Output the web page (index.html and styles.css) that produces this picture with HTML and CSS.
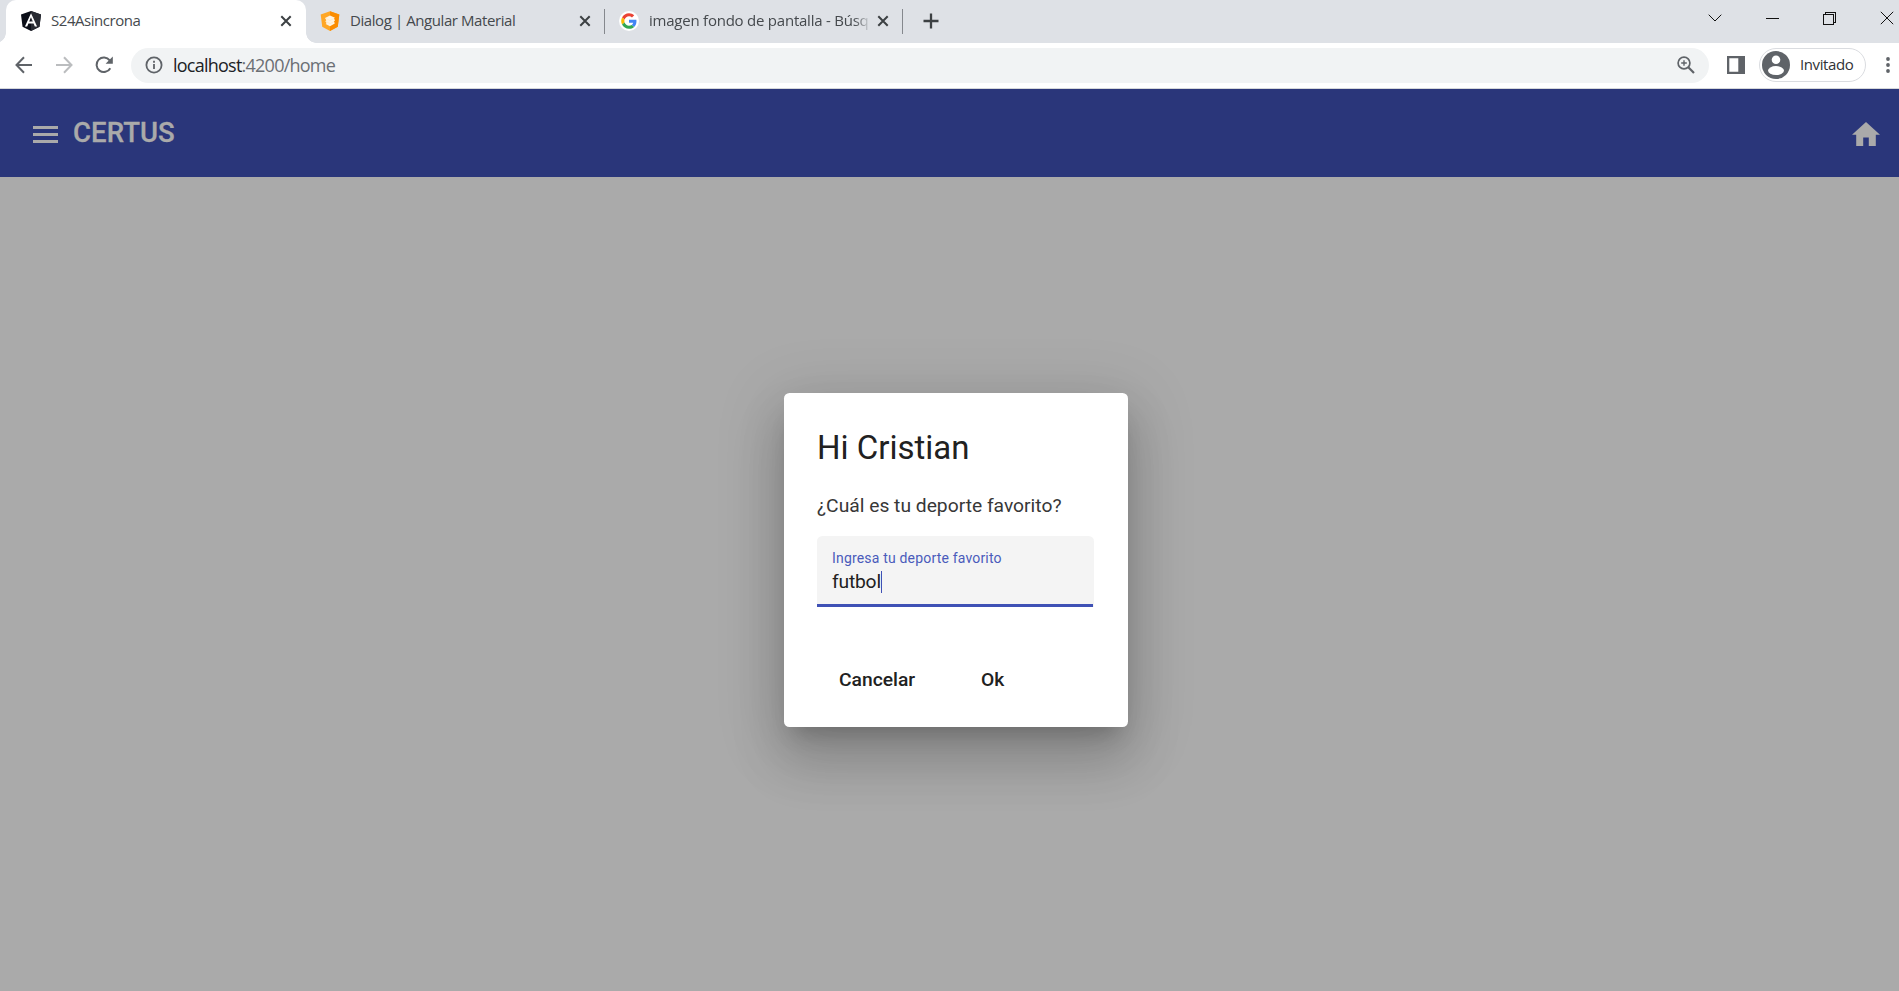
FILE: index.html
```html
<!DOCTYPE html>
<html lang="es">
<head>
<meta charset="utf-8">
<title>S24Asincrona</title>
<link rel="stylesheet" href="styles.css">
</head>
<body>
<header class="tabstrip">
  <div class="tab active">
    <svg class="favicon" viewBox="0 0 20 20"><path fill="#0b0e18" d="M10 0l10 3.4-1.5 12.4L10 20l-8.500-4.200L0 3.400z"/><path fill="#282b33" d="M10 0l10 3.400-1.500 12.400L10 20z"/><path fill="#fff" d="M10 2.200L3.900 15.500h2.300l1.200-3h5.200l1.200 3h2.300zm1.800 8.400H8.200L10 6.300z"/></svg>
    <span class="tab-title t1">S24Asincrona</span>
    <svg class="close" viewBox="0 0 12 12"><path d="M1.300 1.300l9.400 9.400M10.700 1.300l-9.400 9.400"/></svg>
    <span class="foot left"></span><span class="foot right"></span>
  </div>
  <div class="tab second">
    <svg class="favicon" viewBox="0 0 20 20"><path fill="#ffa726" d="M10 0.300l9.300 3.200-1.500 12.300L10 20l-7.800-4.200L.7 3.500z"/><path fill="#fb8c00" d="M10 .3l9.300 3.200-1.500 12.300L10 20z"/><path fill="#fff3e0" d="M10 4.500l5 2.300-1 .7 1 2-1 .8.800 2.200L10 15.200l-4.300-2.100.9-1.200-1.300-1.700 1-.9L5 7z"/><path d="M6 7.500l4 2 4-2M6 10.600l4 2 4-2" fill="none" stroke="#ffe0b2" stroke-width=".5"/></svg>
    <span class="tab-title t2">Dialog | Angular Material</span>
    <svg class="close" viewBox="0 0 12 12"><path d="M1.300 1.300l9.400 9.400M10.700 1.300l-9.400 9.400"/></svg>
  </div>
  <div class="tab divided">
    <svg class="favicon" viewBox="0 0 20 20"><circle cx="10" cy="10" r="10" fill="#fff"/><g transform="translate(2.200 2.200) scale(.325)"><path fill="#EA4335" d="M24 9.500c3.540 0 6.710 1.220 9.210 3.600l6.850-6.850C35.900 2.380 30.470 0 24 0 14.620 0 6.510 5.380 2.560 13.220l7.980 6.190C12.430 13.720 17.740 9.500 24 9.500z"/><path fill="#4285F4" d="M46.980 24.550c0-1.570-.15-3.090-.38-4.550H24v9.020h12.940c-.58 2.960-2.260 5.480-4.780 7.180l7.730 6c4.510-4.180 7.090-10.360 7.090-17.650z"/><path fill="#FBBC05" d="M10.530 28.590c-.48-1.450-.76-2.990-.76-4.590s.27-3.140.76-4.590l-7.980-6.190C.92 16.460 0 20.120 0 24c0 3.880.92 7.540 2.560 10.780l7.970-6.190z"/><path fill="#34A853" d="M24 48c6.480 0 11.930-2.130 15.890-5.810l-7.730-6c-2.150 1.450-4.920 2.300-8.160 2.300-6.260 0-11.570-4.220-13.470-9.910l-7.980 6.190C6.510 42.620 14.620 48 24 48z"/></g></svg>
    <span class="tab-title t3">imagen fondo de pantalla - Búsq</span>
    <svg class="close" viewBox="0 0 12 12"><path d="M1.300 1.300l9.400 9.400M10.700 1.300l-9.400 9.400"/></svg>
  </div>
  <svg class="newtab" viewBox="0 0 16 16"><path d="M8 .5v15M.5 8h15"/></svg>
  <div class="winctl">
    <svg viewBox="0 0 14 14"><path d="M.7 3.700L7 10l6.300-6.300"/></svg>
    <svg viewBox="0 0 14 14" shape-rendering="crispEdges"><path d="M.5 7.500h13"/></svg>
    <svg viewBox="0 0 14 14" shape-rendering="crispEdges"><path d="M.5 3.500h10v10H.5zM2.500 3.500v-2h10v10h-2"/></svg>
    <svg viewBox="0 0 14 14"><path d="M.8.800l12.400 12.400M13.200.8L.8 13.200"/></svg>
  </div>
</header>
<nav class="navbar">
  <svg class="nav back" viewBox="0 0 18 18"><path d="M17 9H2M9 1.300L1.500 9 9 16.700"/></svg>
  <svg class="nav forward" viewBox="0 0 18 18"><path d="M1 9h15M9 1.300L16.500 9 9 16.700"/></svg>
  <svg class="nav reload" viewBox="0 0 18 18"><path d="M15.300 12.200A7.300 7.300 0 1 1 14.700 4.300"/><path class="solid" d="M17.800.6v7.200h-7.200z"/></svg>
  <div class="omnibox">
    <svg class="info" viewBox="0 0 18 18"><circle cx="9" cy="9" r="7.600"/><path d="M9 8v5M9 4.800v2"/></svg>
    <span class="url"><b>localhost</b>:4200/home</span>
    <svg class="mag" viewBox="0 0 18 18"><circle cx="7" cy="7" r="5.900"/><path d="M11.300 11.300l5.700 5.700" stroke-width="2.200"/><path d="M4.200 7h5.600M7 4.200v5.600" stroke-width="1.400"/></svg>
  </div>
  <svg class="panel" viewBox="0 0 18 18"><path d="M0 0h18v18H0zM2.300 2.300v13.400h9V2.300z" fill-rule="evenodd"/></svg>
  <div class="profile">
    <svg viewBox="0 0 28 28"><circle cx="14" cy="14" r="14" fill="#5f6368"/><circle cx="14" cy="8.700" r="4.300" fill="#fff"/><ellipse cx="14" cy="19.600" rx="8" ry="4.500" fill="#fff"/></svg>
    <span>Invitado</span>
  </div>
  <svg class="dots" viewBox="0 0 4 16"><circle cx="2" cy="2" r="1.900"/><circle cx="2" cy="8" r="1.900"/><circle cx="2" cy="14" r="1.900"/></svg>
</nav>
<div class="toolbar">
  <svg class="menu" viewBox="0 0 25 17"><path d="M0 0h25v3H0zM0 7h25v3H0zM0 14h25v3H0z"/></svg>
  <h1>CERTUS</h1>
  <svg class="home" viewBox="2 3 20 17"><path d="M10 20v-6h4v6h5v-8h3L12 3 2 12h3v8z"/></svg>
</div>
<main class="backdrop">
  <section class="dialog">
    <h2>Hi Cristian</h2>
    <p>¿Cuál es tu deporte favorito?</p>
    <div class="field">
      <label>Ingresa tu deporte favorito</label>
      <div class="value"><span>futbol</span><i class="caret"></i></div>
    </div>
    <div class="actions"><button class="cancel">Cancelar</button><button class="ok">Ok</button></div>
  </section>
</main>
</body>
</html>
```
FILE: styles.css
```css
* { box-sizing: border-box; }
body { margin: 0; width: 1899px; height: 991px; overflow: hidden; display: flex; flex-direction: column; background: #aaa; font-family: "Open Sans", "Noto Sans", sans-serif; }
svg { display: block; flex: none; }
h1, h2, p { margin: 0; white-space: nowrap; }

.tabstrip { height: 43px; flex: none; display: flex; background: #dee1e6; padding-left: 6px; }
.tab { position: relative; width: 299px; height: 43px; display: flex; align-items: center; padding: 0 14px 1px 15px; }
.tab.active { width: 300px; background: #fff; border-radius: 10px 10px 0 0; }
.tab.second { width: 298px; padding-left: 14px; padding-right: 13px; }
.foot { position: absolute; bottom: 0; width: 10px; height: 10px; }
.foot.left { left: -10px; background: radial-gradient(circle at 0 0, transparent 9.5px, #fff 10px); }
.foot.right { right: -10px; background: radial-gradient(circle at 100% 0, transparent 9.5px, #fff 10px); }
.divided::before, .divided::after { content: ""; position: absolute; top: 9px; width: 1px; height: 25px; background: #85888d; }
.divided::before { left: 0; }
.divided::after { right: 0; }
.favicon { width: 20px; height: 20px; }
.tab-title { flex: 1; width: 0; margin: 0 12px 2px 10px; font-size: 15px; line-height: 22px; white-space: nowrap; color: #45494d; }
.t1 { letter-spacing: -.45px; }
.t2 { letter-spacing: -.42px; }
.t3 { letter-spacing: -.23px; margin-right: 6px; -webkit-mask-image: linear-gradient(90deg, #000 205px, transparent 222px); mask-image: linear-gradient(90deg, #000 205px, transparent 222px); }
.close { width: 12px; height: 12px; fill: none; stroke: #3c4043; stroke-width: 2; }
.newtab { width: 16px; height: 16px; margin: 13px 0 0 20px; fill: none; stroke: #3c4043; stroke-width: 2.3; }
.winctl { margin-left: auto; padding: 11px 5px 0 0; display: flex; gap: 43.300px; }
.winctl svg { width: 14px; height: 14px; fill: none; stroke: #111; stroke-width: 1; }

.navbar { height: 46px; flex: none; display: flex; align-items: center; padding: 0 9px 1px 15px; background: #fff; border-bottom: 1px solid #d5d7da; }
.nav { width: 18px; height: 18px; fill: none; stroke: #5f6368; stroke-width: 2; }
.forward { margin-left: 21.500px; stroke: #bbbdbf; }
.reload { margin-left: 22px; }
.solid { fill: #5f6368; stroke: none; }
.omnibox { margin-left: 18.500px; width: 1578px; height: 35px; border-radius: 18px; background: #f1f3f4; display: flex; align-items: center; padding: 0 14px; }
.info { width: 18px; height: 18px; fill: none; stroke: #5f6368; stroke-width: 1.800; }
.url { margin-left: 10px; font-size: 18px; line-height: 26px; letter-spacing: -.76px; color: #6b6f74; }
.url b { font-weight: 400; color: #202124; }
.mag { margin-left: auto; width: 18px; height: 18px; fill: none; stroke: #5f6368; stroke-width: 1.700; }
.panel { margin-left: 18px; width: 18px; height: 18px; fill: #5f6368; }
.profile { margin-left: 14px; width: 107px; height: 34px; border: 1px solid #dadce0; border-radius: 17px; display: flex; align-items: center; padding-left: 2px; font-size: 15px; color: #303236; }
.profile svg { width: 28px; height: 28px; }
.profile span { margin: 0 0 2px 10px; letter-spacing: -.4px; }
.dots { margin-left: 20px; width: 4px; height: 16px; fill: #5f6368; }

.toolbar { height: 88px; flex: none; display: flex; align-items: center; padding: 0 19px 0 33px; background: #2a367a; color: #aaa; fill: #aaa; font-family: Roboto, sans-serif; }
.menu { width: 25px; height: 17px; margin-top: 3px; }
.toolbar h1 { margin-left: 15px; font-size: 27.500px; font-weight: 500; line-height: 44px; letter-spacing: .1px; -webkit-text-stroke: .3px #aaa; }
.home { margin: 2px 0 0 auto; width: 28px; height: 24px; }

.backdrop { flex: 1; display: flex; align-items: flex-start; padding: 216px 0 0 784px; font-family: Roboto, sans-serif; color: #212121; }
.dialog { width: 344px; height: 334px; padding: 33px; border-radius: 5.500px; background: #fff; box-shadow: 0 15px 21px -10px rgba(0,0,0,.2), 0 33px 52px 4px rgba(0,0,0,.14), 0 12px 63px 11px rgba(0,0,0,.12); }
.dialog h2 { font-size: 33px; font-weight: 400; line-height: 44px; letter-spacing: 0; }
.dialog p { margin-top: 22px; font-size: 19.250px; line-height: 28px; color: #373737; letter-spacing: 0; }
.field { margin-top: 16px; width: 277px; height: 71px; border-radius: 5.500px 5.500px 0 0; background: linear-gradient(#3f51b5, #3f51b5) 0 100% / 276px 3px no-repeat, #f4f4f4; padding: 12px 15px 0; }
.field label { display: block; font-size: 14px; line-height: 20px; letter-spacing: .18px; color: #4a5bbb; white-space: nowrap; }
.value { display: flex; align-items: center; height: 26px; margin-top: 1px; font-size: 19.250px; line-height: 26px; letter-spacing: -.2px; }
.caret { width: 1px; height: 22px; background: #3f51b5; }
.actions { display: flex; margin-top: 47px; }
.actions button { height: 50px; padding: 0 22px; border: 0; background: none; color: #212121; font: 500 19.250px Roboto, sans-serif; text-align: left; letter-spacing: 0; }
.cancel { width: 142px; }
```
